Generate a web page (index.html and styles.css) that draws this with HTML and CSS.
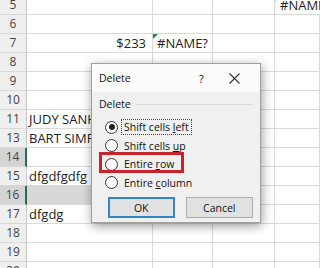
FILE: index.html
```html
<!DOCTYPE html>
<html>
<head>
    <title>Delete cells</title>
    <link rel="stylesheet" href="styles.css">
</head>
<body>
    <!-- worksheet -->
    <div class="sheet">
        <div class="row"><div class="rh">5</div><div class="c"></div><div class="c"></div><div class="c"></div><div class="c err left">#NAME?</div></div>
        <div class="row"><div class="rh">6</div><div class="c"></div><div class="c"></div><div class="c"></div><div class="c"></div></div>
        <div class="row"><div class="rh">7</div><div class="c num">$233</div><div class="c err">#NAME?</div><div class="c"></div><div class="c"></div></div>
        <div class="row"><div class="rh">8</div><div class="c"></div><div class="c"></div><div class="c"></div><div class="c"></div></div>
        <div class="row"><div class="rh">9</div><div class="c"></div><div class="c"></div><div class="c"></div><div class="c"></div></div>
        <div class="row"><div class="rh">10</div><div class="c"></div><div class="c"></div><div class="c"></div><div class="c"></div></div>
        <div class="row"><div class="rh">11</div><div class="c">JUDY SANHEZ</div><div class="c"></div><div class="c"></div><div class="c"></div></div>
        <div class="row"><div class="rh">13</div><div class="c">BART SIMPSON</div><div class="c"></div><div class="c"></div><div class="c"></div></div>
        <div class="row sel"><div class="rh">14</div><div class="c active"></div><div class="c"></div><div class="c"></div><div class="c"></div></div>
        <div class="row"><div class="rh">15</div><div class="c">dfgdfgdfg</div><div class="c"></div><div class="c"></div><div class="c"></div></div>
        <div class="row sel"><div class="rh">16</div><div class="c grey"></div><div class="c grey"></div><div class="c"></div><div class="c"></div></div>
        <div class="row"><div class="rh">17</div><div class="c">dfgdg</div><div class="c"></div><div class="c"></div><div class="c"></div></div>
        <div class="row"><div class="rh">18</div><div class="c"></div><div class="c"></div><div class="c"></div><div class="c"></div></div>
        <div class="row"><div class="rh">19</div><div class="c"></div><div class="c"></div><div class="c"></div><div class="c"></div></div>
        <div class="row"><div class="rh">20</div><div class="c"></div><div class="c"></div><div class="c"></div><div class="c"></div></div>
    </div>

    <!-- Delete dialog -->
    <div class="dialog">
        <div class="title">
            <span class="caption">Delete</span>
            <span class="help">?</span>
            <svg class="close" width="11" height="11" viewBox="0 0 11 11"><path d="M0.5 0.5L10.5 10.5M10.5 0.5L0.5 10.5" stroke="#333" stroke-width="1.1" fill="none"/></svg>
        </div>
        <div class="body">
            <div class="legend"><span>Delete</span><i></i></div>
            <div class="opt"><span class="radio on"></span><span class="focus">Shift cells <u>l</u>eft</span></div>
            <div class="opt"><span class="radio"></span><span>Shift cells <u>u</u>p</span></div>
            <div class="opt"><span class="radio"></span><span>Entire <u>r</u>ow</span><span class="mark"></span></div>
            <div class="opt"><span class="radio"></span><span>Entire <u>c</u>olumn</span></div>
            <div class="buttons">
                <button class="btn ok">OK</button>
                <button class="btn">Cancel</button>
            </div>
        </div>
    </div>
</body>
</html>
```

FILE: styles.css
```css
body{
    margin:0;
    width:320px;
    height:268px;
    overflow:hidden;
    background:#fff;
    font-family:"Open Sans", "Noto Sans", sans-serif;
    color:#222;
}
.sheet{
    margin-top:-4px;
}
.row{
    display:grid;
    grid-template-columns:27px 126px 60px 62px 1fr;
    height:19px;
}
.rh{
    background:#efefef;
    border-right:1px solid #c8c8c8;
    border-bottom:1px solid #d8d8d8;
    color:#444;
    font-size:12px;
    line-height:18px;
    text-align:center;
}
.sel .rh{
    background:#d4d4d4;
    border-right:2px solid #217346;
}
.c{
    position:relative;
    border-right:1px solid #dadada;
    border-bottom:1px solid #dadada;
    font-size:13px;
    line-height:18px;
    padding-left:2px;
    white-space:nowrap;
}
.num{
    text-align:right;
    padding-right:6px;
}
.err{
    text-align:center;
    padding-left:0;
}
.err.left{
    text-align:left;
    padding-left:5px;
}
.err::before{
    content:"";
    position:absolute;
    left:0;
    top:0;
    border-top:5px solid #1e8a3a;
    border-right:5px solid transparent;
}
.grey{
    background:#d8d8d8;
}
.active{
    background:#fff;
}

/* dialog */
.dialog{
    position:absolute;
    left:91px;
    top:63px;
    width:170px;
    height:160px;
    box-sizing:border-box;
    border:1px solid #a0a0a0;
    background:#f0f0f0;
    box-shadow:1px 3px 10px rgba(0,0,0,.4);
    font-size:10.5px;
    color:#111;
}
.title{
    display:flex;
    align-items:center;
    height:28px;
    background:#fbfbfb;
    padding-left:7px;
    font-size:10.5px;
}
.caption{
    width:100px;
}
.help{
    width:30px;
    font-size:11px;
}
.close{
    display:block;
}
.body{
    padding:5px 7px 0;
}
.legend{
    display:flex;
    align-items:center;
    height:14px;
    gap:5px;
}
.legend i{
    flex:1;
    border-top:1px solid #d8d8d8;
}
.opt{
    position:relative;
    display:flex;
    align-items:center;
    gap:6px;
    height:18.5px;
    margin-left:6px;
}
.legend + .opt{
    margin-top:7px;
}
.radio{
    width:11px;
    height:11px;
    border:1px solid #333;
    border-radius:50%;
    background:#fff;
    position:relative;
}
.radio.on::after{
    content:"";
    position:absolute;
    left:2.5px;
    top:2.5px;
    width:6px;
    height:6px;
    border-radius:50%;
    background:#222;
}
.focus{
    outline:1px dotted #444;
    padding:0 2px;
    margin-left:-2px;
}
.mark{
    position:absolute;
    left:-6px;
    top:-3px;
    width:85px;
    height:21px;
    box-sizing:border-box;
    border:3px solid #c8242c;
}
.buttons{
    display:flex;
    gap:11px;
    margin-top:5px;
    margin-left:9px;
}
.btn{
    height:21px;
    width:68px;
    background:#e1e1e1;
    border:1px solid #adadad;
    font-family:inherit;
    font-size:10.5px;
    color:#111;
    padding:0;
}
.btn.ok{
    width:67px;
    border:2px solid #2f86c9;
}
```
